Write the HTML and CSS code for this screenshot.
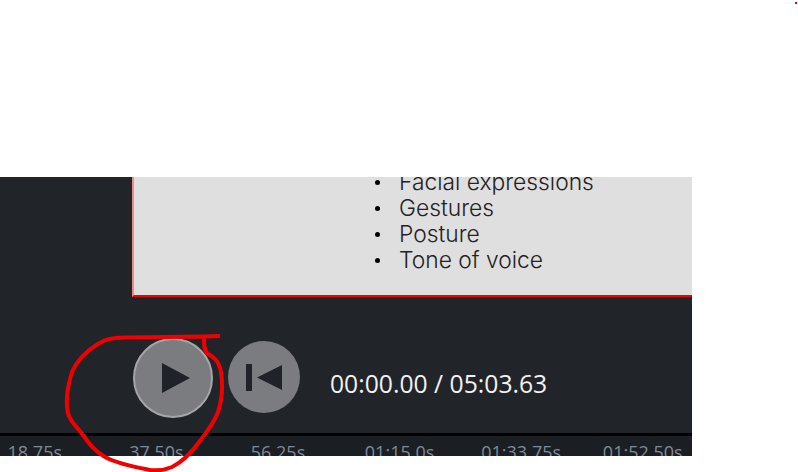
FILE: index.html
```html
<!DOCTYPE html>
<html lang="en">

<head>
    <meta charset="UTF-8">
    <meta name="viewport" content="width=device-width, initial-scale=1.0">
    <title>Player</title>
    <link rel="stylesheet" href="styles.css">
</head>

<body>
    <div class="player">
        <div class="slide">
            <ul class="slide-list">
                <li>Facial expressions</li>
                <li>Gestures</li>
                <li>Posture</li>
                <li>Tone of voice</li>
            </ul>
        </div>

        <div class="controls">
            <button class="btn btn-play" aria-label="Play">
                <svg width="32" height="30" viewBox="0 0 32 30">
                    <path d="M5 0 L33 15 L5 30 Z" />
                </svg>
            </button>
            <button class="btn btn-back" aria-label="Back to start">
                <svg width="36" height="27" viewBox="0 0 36 27">
                    <path d="M0 0 H6 V27 H0 Z M36 1 V26 L11 13.500 Z" />
                </svg>
            </button>
            <div class="time">00:00.00 / 05:03.63</div>
        </div>

        <div class="timeline">
            <span>18.75s</span>
            <span>37.50s</span>
            <span>56.25s</span>
            <span>01:15.0s</span>
            <span>01:33.75s</span>
            <span>01:52.50s</span>
        </div>
    </div>

    <!-- red pen marks drawn over the screenshot -->
    <svg class="scribble" width="798" height="472" viewBox="0 0 798 472">
        <path d="M220 336 L203 336.500 L125 337.500 C112 337.500 104 339 98 344 C88 350 78 358 72 372 C68 385 65 400 68 413 C70 422 78 428 83 435 C90 445 95 451 105 457 C118 464 135 467 150 470 C158 471 165 470 172 467 C182 462 192 452 200 441 C208 430 214 423 218 412 C222 400 223 385 221 372 C219 360 212 356 207 353 C204 350 204 345 204 337" />
        <rect class="dot" x="795" y="2" width="2" height="2" />
    </svg>
</body>

</html>
```

FILE: styles.css
```css
body {
    margin: 0;
    background: white;
    font-family: "Open Sans", Arial, sans-serif;
}

.player {
    width: 692px;
    height: 279px;
    margin-top: 177px;
    background: #212529;
    display: flex;
    flex-direction: column;
    overflow: hidden;
    position: absolute;
    top: 0;
    left: 0;
}

.slide {
    height: 120px;
    margin-left: 132px;
    box-sizing: border-box;
    background: #dfdfdf;
    border-left: 2px solid #f08a85;
    border-bottom: 2px solid #f00000;
    display: flex;
    flex-direction: column;
    justify-content: flex-end;
    overflow: hidden;
    flex: none;
}

.slide-list {
    margin: 0;
    padding: 0 0 22px 241px;
    list-style: none;
    color: #222;
    font-family: Inter, Arial, sans-serif;
    font-size: 22.800px;
    font-weight: 300;
    line-height: 26px;
}

.slide-list li {
    display: flex;
    align-items: center;
    gap: 19px;
}

.slide-list li::before {
    content: "";
    width: 5px;
    height: 5px;
    border-radius: 50%;
    background: black;
    flex: none;
}

.controls {
    height: 136px;
    flex: none;
    box-sizing: border-box;
    padding: 41px 0 0 133px;
    display: flex;
    align-items: flex-start;
    gap: 15px;
}

.btn {
    padding: 0;
    border-radius: 50%;
    background: #7b7c80;
    display: flex;
    align-items: center;
    justify-content: center;
    flex: none;
}

.btn svg {
    fill: #1f2329;
    overflow: visible;
}

.btn-play {
    width: 80px;
    height: 80px;
    border: 2px solid #a6a6a9;
}

.btn-back {
    width: 72px;
    height: 72px;
    margin-top: 3px;
    border: none;
}

.time {
    margin: 31px 0 0 15px;
    color: #f2f2f2;
    font-size: 24.700px;
    line-height: 30px;
    white-space: nowrap;
}

.timeline {
    flex: none;
    height: 23px;
    border-top: 3px solid black;
    background: #1b1e22;
    margin-left: -26px;
    display: grid;
    grid-template-columns: repeat(6, 121.600px);
    color: #7f8a99;
    font-size: 18px;
    line-height: 20px;
    padding-top: 6px;
    text-align: center;
    white-space: nowrap;
}

.scribble {
    position: absolute;
    top: 0;
    left: 0;
    pointer-events: none;
}

.scribble path {
    fill: none;
    stroke: #f00000;
    stroke-width: 4;
    stroke-linejoin: round;
}

.scribble .dot {
    fill: #f00000;
}
```
